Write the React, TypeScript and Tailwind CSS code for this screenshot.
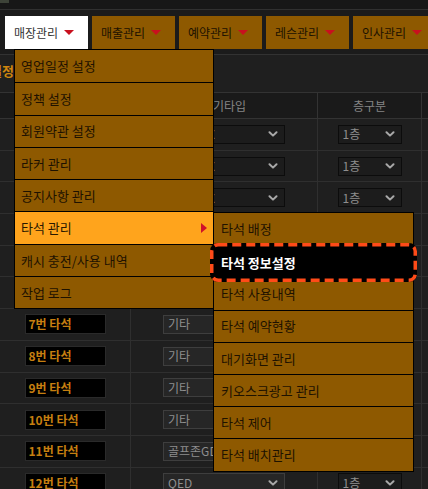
const tabs = ["매장관리", "매출관리", "예약관리", "레슨관리", "인사관리"];

const mainMenu = [
  "영업일정 설정",
  "정책 설정",
  "회원약관 설정",
  "라커 관리",
  "공지사항 관리",
  "타석 관리",
  "캐시 충전/사용 내역",
  "작업 로그",
];

const subMenu = [
  "타석 배정",
  "타석 정보설정",
  "타석 사용내역",
  "타석 예약현황",
  "대기화면 관리",
  "키오스크광고 관리",
  "타석 제어",
  "타석 배치관리",
];

const rows = [
  { name: "1번 타석", type: "골프존VX", light: false },
  { name: "2번 타석", type: "골프존VX", light: false },
  { name: "3번 타석", type: "골프존VX", light: false },
  { name: "4번 타석", type: "골프존VX", light: false },
  { name: "5번 타석", type: "골프존VX", light: false },
  { name: "6번 타석", type: "골프존VX", light: false },
  { name: "7번 타석", type: "기타", light: true },
  { name: "8번 타석", type: "기타", light: true },
  { name: "9번 타석", type: "기타", light: true },
  { name: "10번 타석", type: "기타", light: true },
  { name: "11번 타석", type: "골프존GDR", light: true },
  { name: "12번 타석", type: "QED", light: true },
];

function Chevron() {
  return (
    <svg viewBox="0 0 10 6" className="h-[6px] w-[10px] shrink-0" fill="none" stroke="#a8a8a8" strokeWidth="2" strokeLinecap="round" strokeLinejoin="round">
      <path d="M1.5 1.2 5 4.6 8.5 1.2" />
    </svg>
  );
}

function Select({ value, light, className }: { value: string; light?: boolean; className: string }) {
  return (
    <div
      className={`flex h-[19px] items-center justify-between overflow-hidden border pl-[4px] pr-[6px] ${
        light ? "border-[#3e3e3e] bg-[#262626]" : "border-[#0c0c0c] bg-[#1c1c1c]"
      } ${className}`}
    >
      <span className="whitespace-nowrap text-[12px] leading-none text-[#8e8e8e]">{value}</span>
      <Chevron />
    </div>
  );
}

export default function App() {
  return (
    <div className="relative h-[489px] w-[428px] overflow-hidden bg-[#1f1f1f] font-['Noto_Sans_CJK_KR','Noto_Sans',sans-serif]">
      {/* top strip */}
      <div className="h-[10px] border-b border-[#303030] bg-[#171717]">
        <div className="h-[3px] w-[9px] bg-[#3d4338]" />
      </div>

      {/* nav tabs */}
      <div className="flex h-[45px] gap-[4px] border-b border-[#323232] bg-[#1b1b1b] pt-[6px]">
        <div className="mr-[1px] h-[33px] w-[9px] bg-[#8e5900]" />
        {tabs.map((t, i) => (
          <div
            key={t}
            className={`flex h-[33px] w-[83px] shrink-0 items-center gap-[6px] pl-[9px] pr-[10px] text-[12px] ${
              i === 0 ? "bg-white text-[#333]" : "bg-[#8e5900] text-[#1c1100]"
            }`}
          >
            <span className="whitespace-nowrap">{t}</span>
            <svg viewBox="0 0 10 5" className="h-[5px] w-[10px] shrink-0">
              <path d="M0 0h10L5 5z" fill="#c8101e" />
            </svg>
          </div>
        ))}
      </div>

      {/* page title */}
      <div className="flex h-[37px] w-[14px] justify-end overflow-hidden pt-[8px]">
        <span className="whitespace-nowrap text-[13px] font-bold leading-[16px] text-[#cf860e]">타석 정보설정</span>
      </div>

      {/* table */}
      <div className="border-t border-[#333]">
        <div className="flex h-[26px] border-b border-[#333] bg-[#1a1a1a] text-[12px] text-[#858585]">
          <div className="w-[131px] border-r border-[#333]" />
          <div className="flex w-[187px] items-center justify-center border-r border-[#333]">기기타입</div>
          <div className="flex w-[104px] items-center justify-center border-r border-[#333]">층구분</div>
          <div className="flex-1" />
        </div>
        {rows.map((r) => (
          <div key={r.name} className="flex h-[31.7px] border-b border-[#2f2f2f]">
            <div className="flex w-[131px] items-center justify-center border-r border-[#2f2f2f]">
              <div className="flex h-[20px] w-[81px] items-center border border-[#2a2a2a] bg-black pl-[3px]">
                <span className="whitespace-nowrap text-[12px] font-bold leading-none text-[#c67f10]">{r.name}</span>
              </div>
            </div>
            <div className="flex w-[187px] items-center justify-center border-r border-[#2f2f2f]">
              <Select value={r.type} light={r.light} className="w-[122px]" />
            </div>
            <div className="flex w-[104px] items-center justify-center border-r border-[#2f2f2f]">
              <Select value="1층" className="w-[64px]" />
            </div>
            <div className="flex-1" />
          </div>
        ))}
      </div>

      {/* main dropdown */}
      <div className="absolute left-[14px] top-[49px] flex w-[200px] flex-col border border-black bg-[#8e5900]">
        {mainMenu.map((m, i) => (
          <div
            key={m}
            className={`flex h-[32.3px] items-center justify-between pl-[6px] pr-[6px] text-[13px] ${
              i > 0 ? "border-t border-black" : ""
            } ${i === 5 ? "bg-[#ffa41c] text-[#2a1800]" : "text-[#1e1200]"}`}
          >
            <span className="whitespace-nowrap">{m}</span>
            {i === 5 && (
              <svg viewBox="0 0 6 10" className="h-[10px] w-[6px]">
                <path d="M0 0l6 5-6 5z" fill="#d0102a" />
              </svg>
            )}
          </div>
        ))}
      </div>

      {/* sub menu */}
      <div className="absolute left-[213px] top-[212px] flex w-[201px] flex-col border border-black bg-[#8e5900]">
        {subMenu.map((m, i) => (
          <div
            key={m}
            className={`relative flex h-[32.2px] items-center pl-[7px] text-[13px] text-[#1e1200] ${
              i > 0 ? "border-t border-black" : ""
            }`}
          >
            {i === 1 ? (
              <div className="absolute left-[-4px] top-[-3px] z-10 flex h-[39px] w-[207px] items-center rounded-[8px] bg-black pl-[11px]">
                <svg viewBox="0 0 207 39" className="absolute inset-0 h-[39px] w-[207px]" fill="none">
                  <rect x="1.75" y="1.75" width="203.5" height="35.5" rx="6.5" stroke="#ff4b18" strokeWidth="3.5" strokeDasharray="9 5" />
                </svg>
                <span className="relative whitespace-nowrap font-bold text-white">{m}</span>
              </div>
            ) : (
              <span className="whitespace-nowrap">{m}</span>
            )}
          </div>
        ))}
      </div>
    </div>
  );
}
